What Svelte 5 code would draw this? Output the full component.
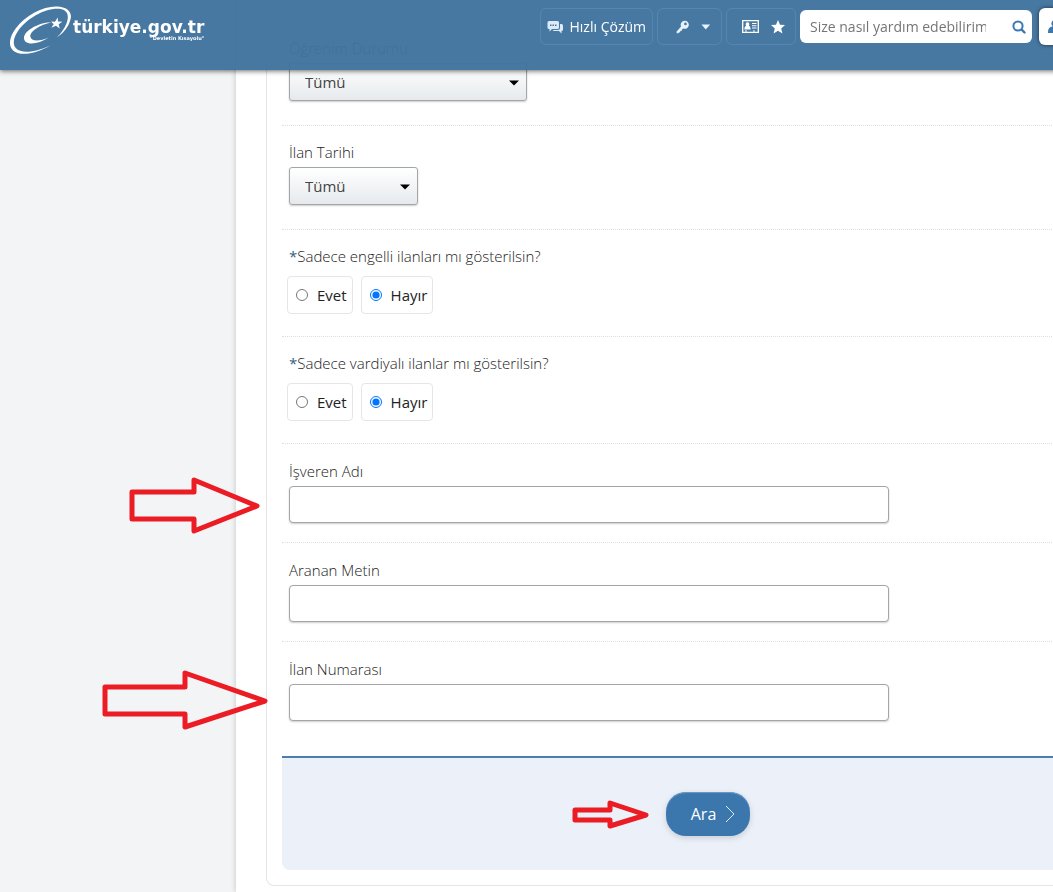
<script lang="ts">
	interface Field {
		id: string;
		label: string;
		kind: 'select' | 'radio' | 'text';
		wide?: boolean;
	}

	const fields: Field[] = [
		{ id: 'ogrenim', label: 'Öğrenim Durumu', kind: 'select', wide: true },
		{ id: 'tarih', label: 'İlan Tarihi', kind: 'select' },
		{ id: 'engelli', label: 'Sadece engelli ilanları mı gösterilsin?', kind: 'radio' },
		{ id: 'vardiyali', label: 'Sadece vardiyalı ilanlar mı gösterilsin?', kind: 'radio' },
		{ id: 'isveren', label: 'İşveren Adı', kind: 'text' },
		{ id: 'metin', label: 'Aranan Metin', kind: 'text' },
		{ id: 'numara', label: 'İlan Numarası', kind: 'text' }
	];

	const arrows = [
		'132,492 194,492 194,480 257,506 194,531 194,519 132,519',
		'105,687 185,687 185,673 265,701 185,727 185,714 105,714',
		'575,810 610,810 610,803 646,815 610,826 610,820 575,820'
	];

	let choices: Record<string, string> = $state({ engelli: 'Hayır', vardiyali: 'Hayır' });
</script>

<div class="page">
	<header class="topbar">
		<a class="logo" href="#top" aria-label="türkiye.gov.tr">
			<svg class="logo-mark" viewBox="15 11 183 143" aria-hidden="true">
				<path
					fill="#fff"
					d="M136 128C105 148 65 159 40 152C8 144 8 110 32 78C62 38 115 11 155 12C190 13 203 32 196 52C190 75 175 92 155 105C172 90 183 70 187 55C193 30 180 19 157 19C115 19 65 50 40 84C20 112 22 138 46 145C68 152 105 144 136 128Z"
				/>
				<path
					fill="#fff"
					d="M139 60C105 58 60 83 57 104C55 129 95 129 132 104C105 117 78 118 76 102C74 88 105 66 139 60Z"
				/>
				<path fill="#fff" d="M158 45L159 57L172 58L161 65L164 78L153 70L139 76L146 65L138 57L150 58Z" />
			</svg>
			<span class="logo-text">
				<span class="logo-name">türkiye.gov.tr</span>
				<span class="logo-tagline">"Devletin Kısayolu"</span>
			</span>
		</a>

		<nav class="tools">
			<a class="tool" href="#cozum">
				<svg width="16" height="14" viewBox="0 0 16 14" aria-hidden="true">
					<path fill="#dcebf7" d="M13 4h1.500q1.500 0 1.500 1.500v4q0 1.500-1.500 1.500v2.500L12 11H7.500Q6 11 5.500 10H11q2 0 2-2Z" />
					<path fill="#dcebf7" d="M2 1h8.500q1.500 0 1.500 1.500v5Q12 9 10.500 9H5L2.500 11.500V9H2Q.5 9 .5 7.500v-5Q.5 1 2 1Z" />
					<path fill="#4878a2" d="M3 4.500h1.500V6H3zm2.500 0H7V6H5.500zm2.500 0h1.500V6H8z" />
				</svg>
				Hızlı Çözüm
			</a>
			<button class="tool tool-key" aria-label="Giriş seçenekleri">
				<svg width="14" height="14" viewBox="0 0 14 14" aria-hidden="true">
					<path
						fill="#e8f2fa"
						fill-rule="evenodd"
						d="M9 .5a4.200 4.200 0 1 1-1.600 8L6.300 9.600 6 11l-1.500.2L4.300 12.500 3 12.800 2.300 13.500H.7V11.700L5.300 6.500A4.200 4.200 0 0 1 9 .5ZM9.800 2.400a1.400 1.400 0 1 0 .1 2.800 1.400 1.400 0 0 0-.1-2.800Z"
					/>
				</svg>
				<svg width="10" height="6" viewBox="0 0 10 6" aria-hidden="true">
					<path fill="#e8f2fa" d="M.5.5h9L5 5.500Z" />
				</svg>
			</button>
			<div class="tool tool-pair">
				<a href="#kart" aria-label="Bilgilerim">
					<svg width="17" height="13" viewBox="0 0 17 13" aria-hidden="true">
						<path fill="none" stroke="#fff" stroke-width="1.300" d="M.7.7h15.600v11.600H.7z" />
						<path fill="#fff" d="M5.500 2.200a2 2 0 0 1 1.300 3.400Q8.700 6.500 8.700 9.500H2.300Q2.300 6.500 4.200 5.600A2 2 0 0 1 5.500 2.200Z" />
						<path fill="#fff" d="M10 3h4.500v1H10zm0 2.300h4.500v1H10zm0 2.300h4.500v1H10zM3 10.500h2v1H3zm8 0h2v1h-2z" />
					</svg>
				</a>
				<a href="#favori" aria-label="Favorilerim">
					<svg width="14" height="14" viewBox="0 0 14 14" aria-hidden="true">
						<path fill="#fff" d="M7 0l2 4.700 5 .4-3.800 3.300 1.200 5L7 10.700l-4.400 2.700 1.200-5L0 5.100l5-.4Z" />
					</svg>
				</a>
			</div>
			<form class="search" role="search" onsubmit={(e) => e.preventDefault()}>
				<input type="text" placeholder="Size nasıl yardım edebilirim?" aria-label="Arama" />
				<button aria-label="Ara">
					<svg width="14" height="14" viewBox="0 0 14 14" aria-hidden="true">
						<circle cx="6" cy="6" r="4.600" fill="none" stroke="#3d78b0" stroke-width="2" />
						<path stroke="#3d78b0" stroke-width="2.400" stroke-linecap="round" d="M9.700 9.700l2.800 2.800" />
					</svg>
				</button>
			</form>
			<a class="user" href="#giris" aria-label="Giriş Yap">
				<svg width="14" height="14" viewBox="0 0 14 14" aria-hidden="true">
					<path fill="#3d78b0" d="M7 0a3.500 3.500 0 0 1 2.300 6.200Q14 7 14 12v1H0v-1Q0 7 4.700 6.200A3.500 3.500 0 0 1 7 0Z" />
				</svg>
			</a>
		</nav>
	</header>

	<aside class="side"></aside>

	<main class="content">
		<form class="panel" onsubmit={(e) => e.preventDefault()}>
			{#each fields as field (field.id)}
				{#if field.kind === 'radio'}
					<fieldset class="row row--radio">
						<legend class="label"><span class="star">*</span>{field.label}</legend>
						<div class="options">
							{#each ['Evet', 'Hayır'] as option (option)}
								<label class="option">
									<input type="radio" name={field.id} value={option} bind:group={choices[field.id]} />
									{option}
								</label>
							{/each}
						</div>
					</fieldset>
				{:else}
					<div class="row" class:row--text={field.kind === 'text'}>
						<label class="label" for={field.id}>{field.label}</label>
						{#if field.kind === 'select'}
							<div class="select" class:select--wide={field.wide}>
								<select id={field.id}>
									<option>Tümü</option>
								</select>
								<svg width="10" height="6" viewBox="0 0 10 6" aria-hidden="true">
									<path d="M0 .5h10L5 5.500Z" />
								</svg>
							</div>
						{:else}
							<input class="text" id={field.id} type="text" />
						{/if}
					</div>
				{/if}
			{/each}
			<div class="actions">
				<button class="submit">
					Ara
					<svg width="10" height="18" viewBox="0 0 10 18" aria-hidden="true">
						<path fill="none" stroke="#dcebf7" d="M1 1l8 8-8 8" />
					</svg>
				</button>
			</div>
		</form>
	</main>

	<svg class="arrows" aria-hidden="true">
		{#each arrows as points (points)}
			<polygon {points} />
		{/each}
	</svg>
</div>

<style>
	:global(body) {
		overflow-x: hidden;
		background: #fff;
		font-family: 'Open Sans', 'Noto Sans', sans-serif;
		font-size: 15px;
		color: #222;
	}
	.page {
		position: relative;
		display: flex;
		min-width: 1180px;
		min-height: 100vh;
	}
	.topbar {
		position: fixed;
		z-index: 2;
		top: 0;
		left: 0;
		right: 0;
		box-sizing: border-box;
		min-width: 1180px;
		height: 70px;
		padding: 6px 30px 0 10px;
		display: flex;
		align-items: flex-start;
		justify-content: space-between;
		background: rgba(64, 114, 158, 0.96);
		box-shadow: 0 1px 5px rgba(0, 0, 0, 0.6);
	}
	.logo {
		display: flex;
		gap: 2px;
		color: #fff;
		text-decoration: none;
		font-family: 'DejaVu Sans', sans-serif;
		font-weight: bold;
	}
	.logo-mark {
		width: 61px;
		height: 48px;
	}
	.logo-text {
		display: flex;
		flex-direction: column;
		align-items: flex-end;
		padding-top: 13px;
	}
	.logo-name {
		font-size: 17px;
		line-height: 17px;
	}
	.logo-tagline {
		font-size: 5px;
		line-height: 5px;
	}
	.tools {
		display: flex;
		align-items: flex-start;
		gap: 4px;
		padding-top: 2px;
	}
	.tool {
		box-sizing: border-box;
		height: 37px;
		display: flex;
		align-items: center;
		border: 1px solid #5585b0;
		border-radius: 6px;
		background: none;
		color: #fff;
		text-decoration: none;
		font: inherit;
		font-size: 14px;
		gap: 7px;
		padding: 0 6px;
		white-space: nowrap;
	}
	.tool-key {
		width: 65px;
		gap: 12px;
		padding: 0 10px 0 18px;
	}
	.tool-pair {
		width: 70px;
		gap: 12px;
		padding: 0 10px 0 15px;
	}
	.tool-pair a {
		display: flex;
	}
	.search {
		box-sizing: border-box;
		width: 232px;
		height: 33px;
		margin: 2px 3px 0 0;
		display: flex;
		align-items: center;
		border-radius: 6px;
		background: #fff;
		padding: 0 6px 0 10px;
	}
	.search input {
		width: 176px;
		padding: 0;
		border: 0;
		outline: 0;
		font: inherit;
		font-size: 14px;
	}
	.search input::placeholder {
		color: #757575;
	}
	.search button {
		margin-left: auto;
		padding: 0;
		border: 0;
		background: none;
		display: flex;
	}
	.user {
		box-sizing: border-box;
		width: 111px;
		height: 37px;
		display: flex;
		align-items: center;
		padding-left: 9px;
		border-radius: 6px;
		background: #fff;
		box-shadow: 0 0 4px rgba(0, 0, 0, 0.6);
	}
	.side {
		flex: 0 0 236px;
		background: #f3f4f6;
	}
	.content {
		flex: 1;
		min-width: 0;
		background: #fff;
		box-shadow: 0 0 6px rgba(0, 0, 0, 0.2);
		padding: 0 30px 6px;
	}
	.panel {
		border: 1px solid #e4e4e6;
		border-top: 0;
		border-radius: 0 0 8px 8px;
		padding: 22px 15px 15px;
	}
	.row {
		margin: 0;
		padding: 16px 7px 24px;
		border: 0;
		border-bottom: 1px dotted #dedede;
	}
	.row--radio {
		padding: 16px 5px 22px;
	}
	.row--text {
		padding: 17px 7px 19px;
	}
	.row--text:nth-last-child(2) {
		border-bottom: 0;
	}
	.label {
		display: block;
		padding: 0;
		margin-bottom: 5px;
		font-weight: 300;
		line-height: 20px;
	}
	.row--radio .label {
		float: left;
		width: 100%;
		padding-left: 2px;
		margin-bottom: 10px;
	}
	.star {
		font-weight: 400;
		color: #2f6383;
	}
	.select {
		position: relative;
		width: 129px;
		height: 38px;
	}
	.select--wide {
		width: 238px;
	}
	.select select {
		appearance: none;
		box-sizing: border-box;
		width: 100%;
		height: 100%;
		padding: 0 15px;
		border: 1px solid #a3a5a8;
		border-radius: 3px;
		background: linear-gradient(#fff, #e6eaed);
		box-shadow: 0 1px 2px rgba(0, 0, 0, 0.2);
		font: inherit;
		color: #444;
	}
	.select svg {
		position: absolute;
		right: 8px;
		top: 17px;
		pointer-events: none;
	}
	.options {
		clear: both;
		display: flex;
		gap: 8px;
	}
	.option {
		box-sizing: border-box;
		height: 38px;
		display: flex;
		align-items: center;
		gap: 9px;
		padding: 0 5px 0 8px;
		border: 1px solid #e6e6e8;
		border-radius: 4px;
	}
	.option input {
		width: 12px;
		height: 12px;
		margin: 0;
	}
	.text {
		display: block;
		box-sizing: border-box;
		width: 600px;
		height: 37px;
		padding: 0 10px;
		border: 1px solid #a3a5a8;
		border-radius: 4px;
		background: #fff;
		box-shadow: 0 1px 2px rgba(0, 0, 0, 0.2);
		font: inherit;
	}
	.actions {
		display: flex;
		justify-content: center;
		margin-top: 16px;
		padding: 34px 0;
		border-top: 2px solid #4d7dae;
		border-radius: 0 0 8px 8px;
		background: #ebf0f9;
	}
	.submit {
		height: 44px;
		display: flex;
		align-items: center;
		gap: 9px;
		padding: 0 15px 0 25px;
		border: 0;
		border-radius: 20px;
		background: #3b76ad;
		box-shadow:
			inset 0 1px 1px #6c9cc8,
			0 2px 6px rgba(0, 0, 0, 0.15);
		color: #fff;
		font: inherit;
		font-size: 16px;
	}
	.arrows {
		position: absolute;
		z-index: 1;
		top: 0;
		left: 0;
		width: 100%;
		height: 100%;
		pointer-events: none;
	}
	.arrows polygon {
		fill: none;
		stroke: #ec1c24;
		stroke-width: 5px;
		stroke-linejoin: round;
	}
</style>
